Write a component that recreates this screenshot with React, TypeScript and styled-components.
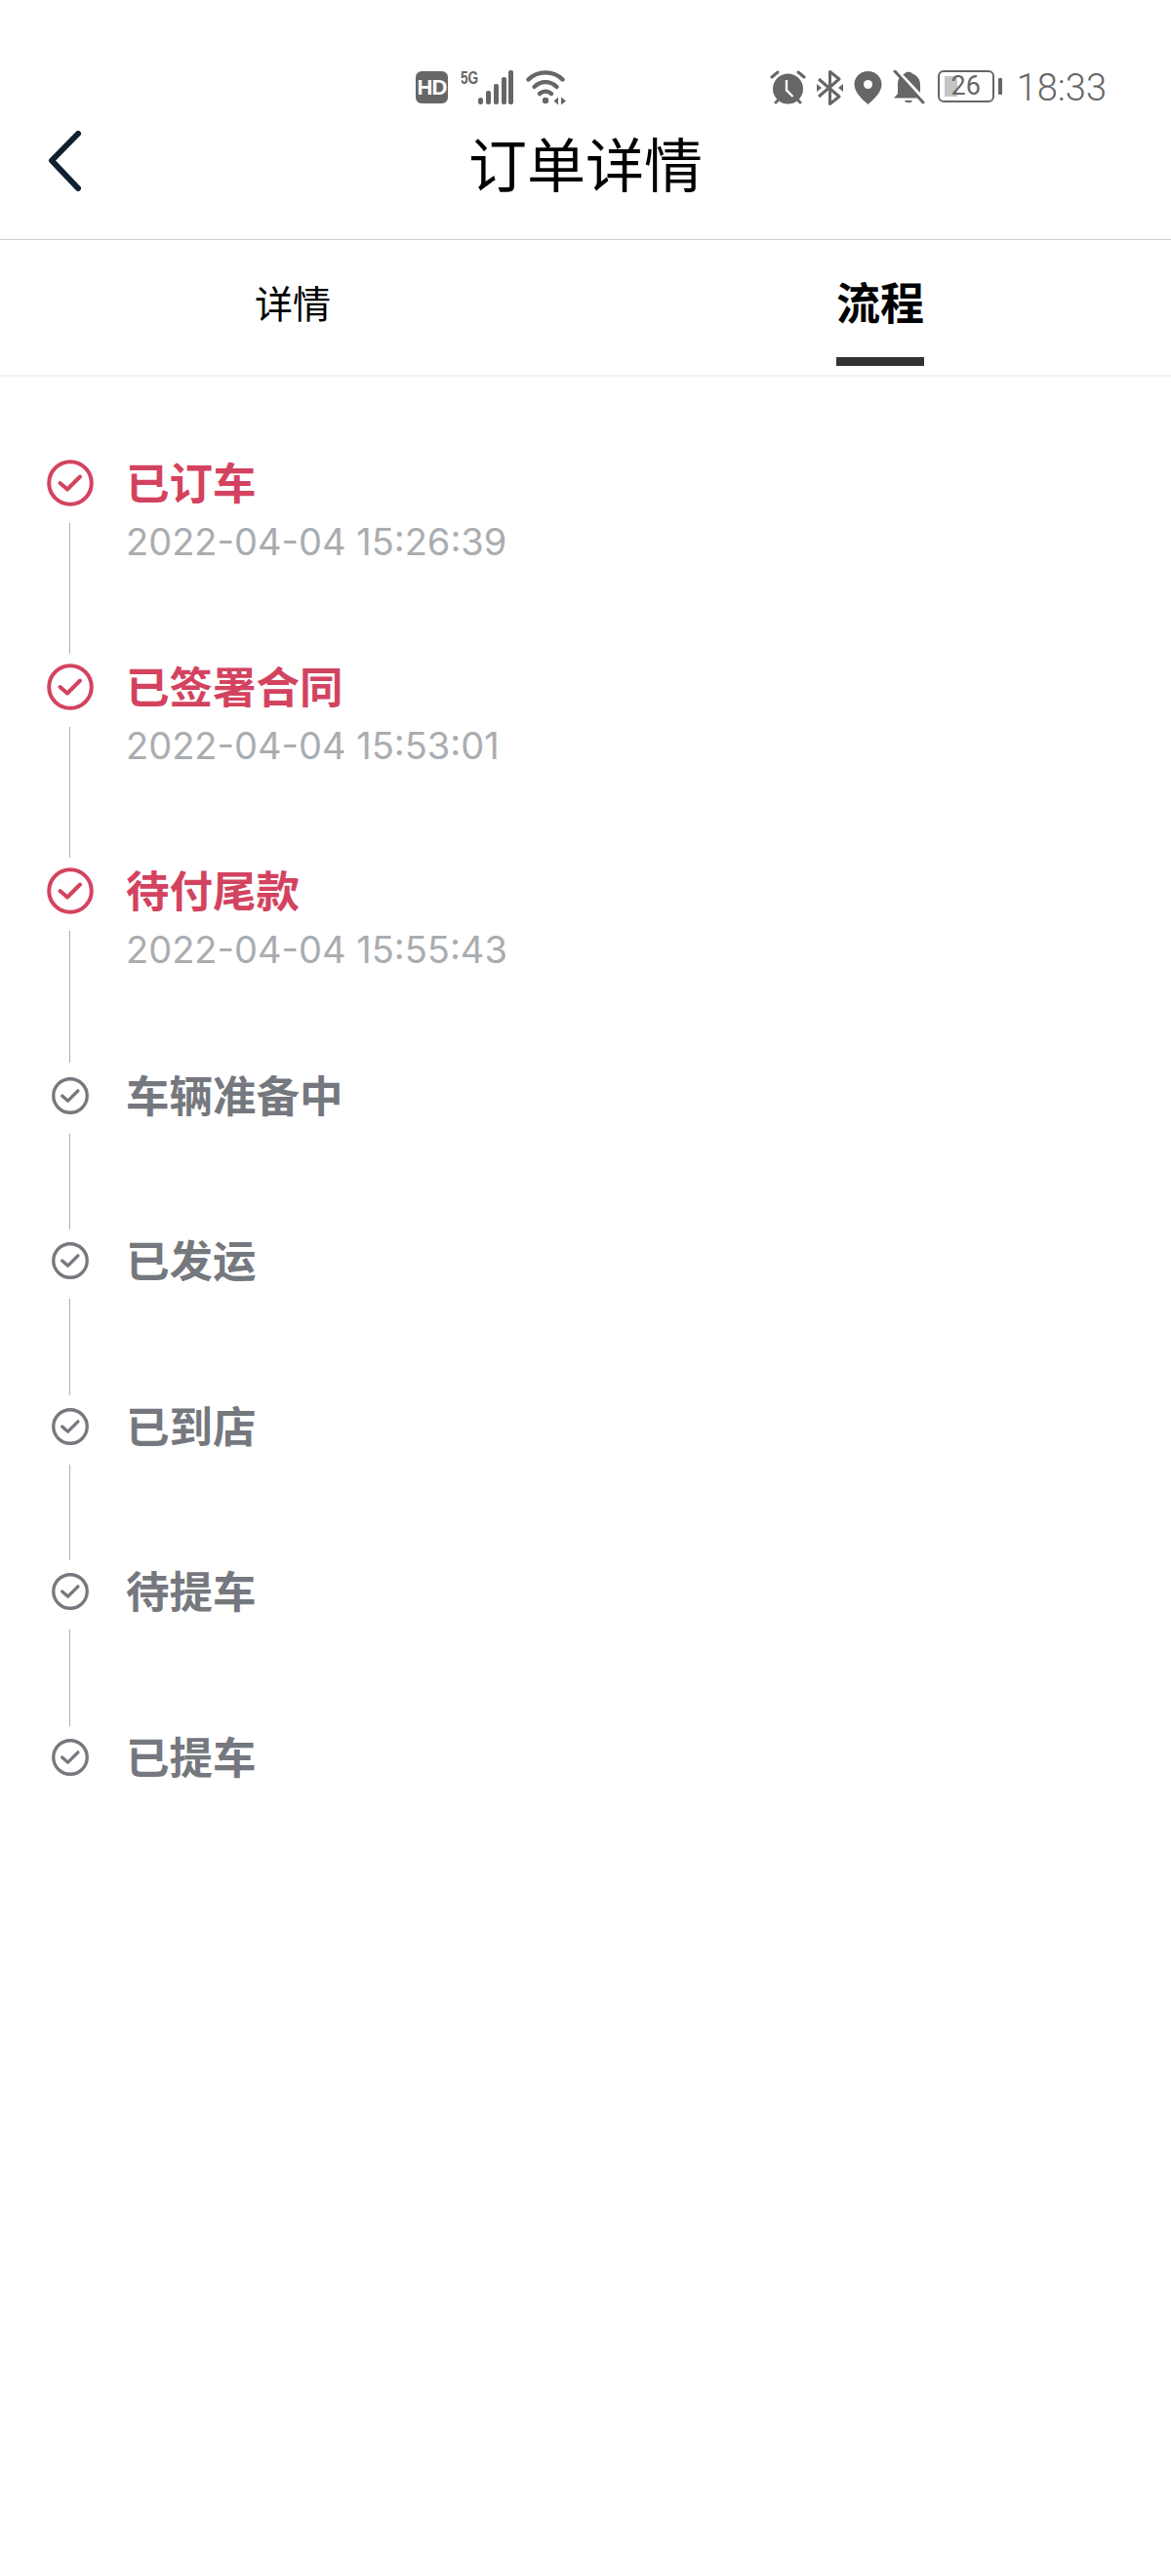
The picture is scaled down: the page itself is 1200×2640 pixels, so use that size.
import React from 'react';
import styled, { createGlobalStyle } from 'styled-components';

const CJK = '"Noto Sans CJK SC", "Noto Sans", sans-serif';
const RED = '#d3435f';
const GRAY = '#75787e';
const ICON = '#666666';

const GlobalStyle = createGlobalStyle`
    html, body {
        margin: 0;
        padding: 0;
        background: #ffffff;
    }
`;

const Page = styled.div`
    width: 1200px;
    min-height: 2640px;
    background: #ffffff;
    font-family: ${CJK};
`;

const StatusBar = styled.div`
    height: 110px;
    box-sizing: border-box;
    padding: 72px 66px 0 426px;
    display: flex;
    justify-content: space-between;
    align-items: flex-start;
`;

const StatusGroup = styled.div<{ $gap: number }>`
    display: flex;
    align-items: flex-start;
    gap: ${(p) => p.$gap}px;
`;

const HdBadge = styled.span`
    width: 33px;
    height: 33px;
    margin-top: 1px;
    border-radius: 6px;
    background: ${ICON};
    color: #fff;
    font: bold 22px/33px 'Liberation Sans', sans-serif;
    letter-spacing: -1px;
    text-align: center;
`;

const SignalWrap = styled.div`
    display: flex;
    align-items: flex-start;
`;

const FiveG = styled.span`
    font: bold 19px/16px 'Liberation Sans', sans-serif;
    color: ${ICON};
    width: 18px;
    margin-top: 0;
    transform: scaleX(0.72);
    transform-origin: left top;
    white-space: nowrap;
`;

const BatteryBox = styled.div`
    width: 58px;
    height: 33px;
    box-sizing: border-box;
    margin: 0 0 0 2px;
    border: 2px solid ${ICON};
    border-radius: 6px;
    display: flex;
    align-items: center;
    justify-content: center;
    position: relative;
    color: ${ICON};
    font: 27px/29px 'Roboto', sans-serif;
`;

const BatteryFill = styled.span`
    position: absolute;
    left: 5px;
    top: 4px;
    bottom: 4px;
    width: 13px;
    background: #c4c4c4;
`;

const BatteryDigits = styled.span`
    position: relative;
`;

const BatteryNub = styled.span`
    width: 4px;
    height: 17px;
    margin: 8px 0 0 4px;
    background: ${ICON};
    border-radius: 1px;
`;

const Battery = styled.div`
    display: flex;
    align-items: flex-start;
`;

const Clock = styled.span`
    margin: -5px 0 0 4px;
    font: 300 38px/46px 'Roboto', sans-serif;
    color: ${ICON};
`;

const NavBar = styled.div`
    height: 136px;
    box-sizing: border-box;
    padding: 0 0 24px 0;
    display: grid;
    grid-template-columns: 1fr auto 1fr;
    align-items: center;
    border-bottom: 1px solid #cccccc;
`;

const BackButton = styled.div`
    padding-left: 48px;
    display: flex;
`;

const Title = styled.h1`
    margin: 0;
    font-size: 60px;
    line-height: 78px;
    font-weight: 400;
    color: #000;
`;

const Tabs = styled.div`
    height: 140px;
    box-sizing: border-box;
    display: flex;
    border-bottom: 2px solid #f2f2f2;
`;

const Tab = styled.div<{ $active?: boolean }>`
    flex: 1;
    display: flex;
    justify-content: center;
    position: relative;
    padding-top: 33px;
    padding-left: ${(p) => (p.$active ? 6 : 2)}px;
    color: #000;
    font-size: ${(p) => (p.$active ? 45 : 39)}px;
    line-height: 60px;
    font-weight: ${(p) => (p.$active ? 700 : 400)};
`;

const TabLabel = styled.span<{ $active?: boolean }>`
    position: relative;
    height: 60px;
    &::after {
        content: '';
        display: ${(p) => (p.$active ? 'block' : 'none')};
        position: absolute;
        left: 0;
        right: 0;
        top: 87px;
        height: 9px;
        background: #333333;
    }
`;

const Steps = styled.div`
    padding: 85px 0 0 48px;
`;

const Step = styled.div<{ $height: number }>`
    height: ${(p) => p.$height}px;
    display: flex;
    gap: 33px;
`;

const Rail = styled.div`
    width: 48px;
    display: flex;
    flex-direction: column;
    align-items: center;
`;

const IconBox = styled.div`
    height: 48px;
    display: flex;
    align-items: center;
    flex: none;
`;

const Connector = styled.div<{ $done?: boolean }>`
    flex: 1;
    width: 1px;
    margin: ${(p) => (p.$done ? '17px 1px 10px 0' : '15px 1px 8px 0')};
    background: #adadad;
`;

const StepTitle = styled.div<{ $done?: boolean }>`
    font-size: 44.5px;
    line-height: 44px;
    font-weight: 700;
    color: ${(p) => (p.$done ? RED : GRAY)};
`;

const StepTime = styled.div`
    margin-top: 18px;
    font: 400 38px/44px 'Inter', sans-serif;
    color: #aaadb0;
`;

const CheckIcon = ({ done }: { done?: boolean }) => {
    const size = done ? 48 : 38;
    return (
        <svg width={size} height={size} viewBox="0 0 48 48" fill="none" stroke={done ? RED : GRAY} strokeWidth={done ? 4 : 4.2} strokeLinecap="round" strokeLinejoin="round">
            <circle cx="24" cy="24" r="21.800" />
            <path d="M13.500 24l7.500 6.500 13-13" />
        </svg>
    );
};

const SignalBars = () => (
    <svg width="36" height="36" viewBox="0 0 36 36" fill={ICON}>
        <rect x="0" y="28" width="5" height="7" rx="2.500" />
        <rect x="8" y="21" width="5" height="14" rx="2" />
        <rect x="16" y="14" width="5" height="21" rx="2" />
        <rect x="24" y="7" width="5" height="28" rx="2" />
        <rect x="31" y="0" width="5" height="35" rx="2" />
    </svg>
);

const Wifi = () => (
    <svg width="42" height="36" viewBox="0 0 42 36" fill="none" stroke={ICON} strokeWidth="4.400" strokeLinecap="round">
        <path d="M2.500 9.500C12 0 28 0 37.500 9.500" />
        <path d="M8.500 17C15 10.500 25 10.500 31.500 17" />
        <path d="M14 24c3.500-3 8.500-3 12 0" />
        <circle cx="20" cy="31" r="3.200" fill={ICON} stroke="none" />
        <path d="M33 27.500l-4.500 4 4.500 4zM36 27.500l5 4-5 4z" fill={ICON} stroke="none" />
    </svg>
);

const Alarm = () => (
    <svg width="37" height="36" viewBox="0 0 37 36" fill="none">
        <circle cx="18.500" cy="19" r="15.500" fill={ICON} />
        <path d="M17 10v10.500l6.500 6.500" stroke="#fff" strokeWidth="2.400" />
        <path d="M2 7l6-5M35 7l-6-5M6 33l2-2M31 33l-2-2" stroke={ICON} strokeWidth="3" strokeLinecap="round" />
    </svg>
);

const Bluetooth = () => (
    <svg width="27" height="36" viewBox="0 0 27 36" fill="none" stroke={ICON} strokeWidth="3">
        <path d="M2 9l21 18-9.500 7.500V1.500L23 9 2 27" strokeLinejoin="round" />
        <path d="M0 14l5 4-5 4zM27 14l-5 4 5 4z" fill={ICON} stroke="none" />
    </svg>
);

const Pin = () => (
    <svg width="29" height="36" viewBox="0 0 29 36">
        <path d="M14.500 1C6.500 1 .5 7 .5 14.500.5 23 9 30 14.500 35 20 30 28.500 23 28.500 14.500 28.500 7 22.500 1 14.500 1z" fill={ICON} />
        <circle cx="14.500" cy="14.500" r="4.500" fill="#fff" />
    </svg>
);

const BellOff = () => (
    <svg width="33" height="36" viewBox="0 0 33 36" fill="none">
        <path d="M12 3.500c1-2.500 7-2.500 8 0 5 2 8 6 8 11V24l3 4.500H1l4-4.500V14.500c0-5 2-9 7-11z" fill={ICON} />
        <path d="M12 31h8c-.5 3-7.500 3-8 0z" fill={ICON} />
        <path d="M3 -1l31 33" stroke="#fff" strokeWidth="3.500" />
        <path d="M2 1l29 32" stroke={ICON} strokeWidth="3" strokeLinecap="round" />
    </svg>
);

const BackChevron = () => (
    <svg width="36" height="64" viewBox="0 0 36 64" fill="none" stroke="#0f2030" strokeWidth="6" strokeLinecap="round" strokeLinejoin="round">
        <path d="M32 3L5 30.500 32 59" />
    </svg>
);

const steps = [
    { title: '已订车', time: '2022-04-04 15:26:39', done: true, height: 209 },
    { title: '已签署合同', time: '2022-04-04 15:53:01', done: true, height: 209 },
    { title: '待付尾款', time: '2022-04-04 15:55:43', done: true, height: 210 },
    { title: '车辆准备中', height: 169 },
    { title: '已发运', height: 169.5 },
    { title: '已到店', height: 169.5 },
    { title: '待提车', height: 169.5 },
    { title: '已提车', height: 48 },
];

export default function App() {
    return (
        <Page>
            <GlobalStyle />
            <StatusBar>
                <StatusGroup $gap={13}>
                    <HdBadge>HD</HdBadge>
                    <SignalWrap>
                        <FiveG>5G</FiveG>
                        <SignalBars />
                    </SignalWrap>
                    <Wifi />
                </StatusGroup>
                <StatusGroup $gap={11}>
                    <Alarm />
                    <Bluetooth />
                    <Pin />
                    <BellOff />
                    <Battery>
                        <BatteryBox>
                            <BatteryFill />
                            <BatteryDigits>26</BatteryDigits>
                        </BatteryBox>
                        <BatteryNub />
                    </Battery>
                    <Clock>18:33</Clock>
                </StatusGroup>
            </StatusBar>
            <NavBar>
                <BackButton>
                    <BackChevron />
                </BackButton>
                <Title>订单详情</Title>
            </NavBar>
            <Tabs>
                <Tab>
                    <TabLabel>详情</TabLabel>
                </Tab>
                <Tab $active>
                    <TabLabel $active>流程</TabLabel>
                </Tab>
            </Tabs>
            <Steps>
                {steps.map((step, i) => (
                    <Step key={step.title} $height={step.height}>
                        <Rail>
                            <IconBox>
                                <CheckIcon done={step.done} />
                            </IconBox>
                            {i < steps.length - 1 && <Connector $done={step.done} />}
                        </Rail>
                        <div>
                            <StepTitle $done={step.done}>{step.title}</StepTitle>
                            {step.time && <StepTime>{step.time}</StepTime>}
                        </div>
                    </Step>
                ))}
            </Steps>
        </Page>
    );
}
